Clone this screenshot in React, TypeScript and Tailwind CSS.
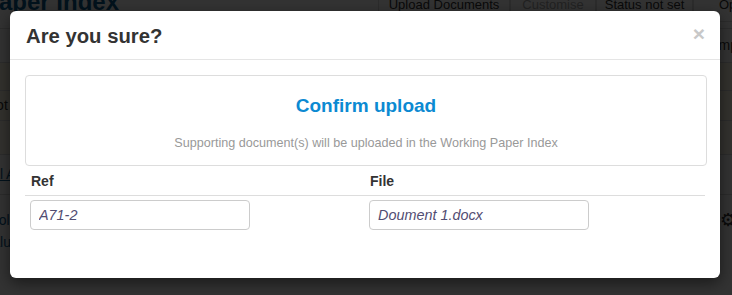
import React from 'react';

const BackgroundPage: React.FC = () => {
  return (
    <div className="h-[295px] bg-white font-['Liberation_Sans',Arial,sans-serif] text-[#333]">
      {/* Page header (mostly hidden behind the dialog) */}
      <div className="flex items-start justify-between h-[29px] border-b border-[#ddd]">
        <h1 className="-mt-[14px] -ml-[17px] text-[24px] font-bold text-[#0b5a8c] leading-[32px]">Paper Index</h1>
        <div className="flex -mt-[12px] -mr-[13px] text-[13px]">
          <span className="w-[132px] text-center py-[6px] border border-[#ddd]">Upload Documents</span>
          <span className="w-[86px] text-center py-[6px] border border-[#ddd] text-[#aaa]">Customise</span>
          <span className="w-[97px] text-center py-[6px] border border-[#ddd]">Status not set</span>
          <span className="w-[50px] px-[25px] py-[6px] border border-[#ddd]">Op</span>
        </div>
      </div>
      <div className="flex justify-end border-b border-[#ddd] h-[34px] items-center">
        <span className="text-[14px] mr-[-6px]">Comp</span>
      </div>
      <div className="h-[28px] bg-[#fffbe5] border-b border-[#ddd]" />
      <div className="flex items-center h-[30px] bg-[#fffbe5] border-b border-[#ddd] text-[14px] -ml-[14px]">Not</div>
      <div className="h-[34px] bg-[#fcfbe8] border-b border-[#ddd]" />
      <div className="flex items-center h-[40px] border-b border-[#ddd] text-[14px] -ml-[18px]">
        <span className="underline text-[#0b5a8c]">Ral A</span>
      </div>
      <div className="flex justify-between pt-[14px] text-[14px] text-[#0b5a8c] -ml-[16px] leading-[22px]">
        <div>
          <div>Tool</div>
          <div>Value</div>
        </div>
        <span className="text-[#333] text-[18px] mr-[-4px]">⚙</span>
      </div>
    </div>
  );
};

const App: React.FC = () => {
  return (
    <div className="relative w-[732px] h-[295px] overflow-hidden">
      <BackgroundPage />

      {/* Backdrop */}
      <div className="absolute inset-0 bg-black/80" />

      {/* Dialog */}
      <div className="absolute left-[10px] top-[11px] w-[710px] h-[267px] bg-white rounded-[6px] shadow-[0_5px_15px_rgba(0,0,0,0.5)] font-['Liberation_Sans',Arial,sans-serif] text-[#333]">
        <div className="flex items-center justify-between h-[49px] pl-[16px] pr-[15px] border-b border-[#e5e5e5]">
          <h4 className="text-[20.3px] font-bold leading-[20px] mt-[2px]">Are you sure?</h4>
          <button className="text-[21px] font-bold leading-none text-[#c8c8c8] mt-[-4px]">×</button>
        </div>

        <div className="pl-[15px] pr-[13px] pt-[15px]">
          <div className="h-[91px] border border-[#ddd] rounded-[4px] flex flex-col items-center">
            <h3 className="mt-[19px] text-[19px] font-bold text-[#0c8ad2] leading-[22px]">Confirm upload</h3>
            <p className="mt-[18px] text-[12.6px] text-[#999] leading-[16px]">
              Supporting document(s) will be uploaded in the Working Paper Index
            </p>
          </div>

          <table className="w-[680px] mt-[1px] text-[14px]">
            <thead>
              <tr className="border-b border-[#ddd]">
                <th className="w-[340px] text-left font-bold px-[6px] h-[28px] pt-[2px]">Ref</th>
                <th className="text-left font-bold px-[5px] h-[28px] pt-[2px]">File</th>
              </tr>
            </thead>
            <tbody>
              <tr>
                <td className="px-[5px] pt-[4px]">
                  <input
                    readOnly
                    value="A71-2"
                    className="w-[220px] h-[30px] px-[8px] border border-[#ccc] rounded-[4px] italic text-[14.4px] text-[#524d72] outline-none"
                  />
                </td>
                <td className="px-[4px] pt-[4px]">
                  <input
                    readOnly
                    value="Doument 1.docx"
                    className="w-[220px] h-[30px] px-[8px] border border-[#ccc] rounded-[4px] italic text-[14.4px] text-[#524d72] outline-none"
                  />
                </td>
              </tr>
            </tbody>
          </table>
        </div>
      </div>
    </div>
  );
};

export default App;
